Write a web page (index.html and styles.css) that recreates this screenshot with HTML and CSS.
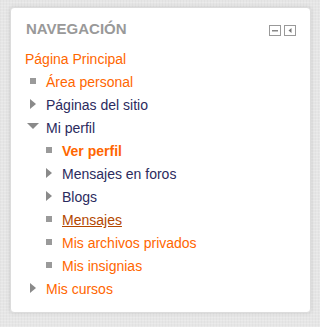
FILE: index.html
```html
<!DOCTYPE html>
<html lang="es">
<head>
<meta charset="utf-8">
<title>Navegación</title>
<link rel="stylesheet" href="styles.css">
</head>
<body>
<section class="block">
  <header class="block-header">
    <h2 class="block-title">NAVEGACIÓN</h2>
    <div class="block-controls">
      <svg class="ctl" width="12" height="11" viewBox="0 0 12 11"><rect x="0.5" y="0.5" width="11" height="10" fill="#fff" stroke="#999"/><rect x="3" y="5" width="6" height="1.5" fill="#888"/></svg>
      <svg class="ctl" width="12" height="11" viewBox="0 0 12 11"><rect x="0.5" y="0.5" width="11" height="10" fill="#fff" stroke="#999"/><path d="M7.5 3 L4.5 5.5 L7.5 8 Z" fill="#777"/></svg>
    </div>
  </header>
  <ul class="tree">
    <li class="top"><a class="link" href="#">Página Principal</a></li>
    <li>
      <ul class="level">
        <li class="row"><span class="ico"><svg class="sq" width="6" height="6"><rect width="6" height="6" fill="#9a9a9a"/></svg></span><a class="link" href="#">Área personal</a></li>
        <li class="row"><span class="ico"><svg class="tri-r" width="6" height="10"><path d="M0 0 L6 5 L0 10 Z" fill="#8a8a8a"/></svg></span><span class="label">Páginas del sitio</span></li>
        <li>
          <div class="row"><span class="ico"><svg class="tri-d" width="12" height="6"><path d="M0 0 L12 0 L6 6 Z" fill="#8a8a8a"/></svg></span><span class="label">Mi perfil</span></div>
          <ul class="level sub">
            <li class="row"><span class="ico"><svg class="sq" width="6" height="6"><rect width="6" height="6" fill="#9a9a9a"/></svg></span><a class="link active" href="#">Ver perfil</a></li>
            <li class="row"><span class="ico"><svg class="tri-r" width="6" height="10"><path d="M0 0 L6 5 L0 10 Z" fill="#8a8a8a"/></svg></span><span class="label">Mensajes en foros</span></li>
            <li class="row"><span class="ico"><svg class="tri-r" width="6" height="10"><path d="M0 0 L6 5 L0 10 Z" fill="#8a8a8a"/></svg></span><span class="label">Blogs</span></li>
            <li class="row"><span class="ico"><svg class="sq" width="6" height="6"><rect width="6" height="6" fill="#9a9a9a"/></svg></span><a class="link hover" href="#">Mensajes</a></li>
            <li class="row"><span class="ico"><svg class="sq" width="6" height="6"><rect width="6" height="6" fill="#9a9a9a"/></svg></span><a class="link" href="#">Mis archivos privados</a></li>
            <li class="row"><span class="ico"><svg class="sq" width="6" height="6"><rect width="6" height="6" fill="#9a9a9a"/></svg></span><a class="link" href="#">Mis insignias</a></li>
          </ul>
        </li>
        <li class="row"><span class="ico"><svg class="tri-r" width="6" height="10"><path d="M0 0 L6 5 L0 10 Z" fill="#8a8a8a"/></svg></span><a class="link" href="#">Mis cursos</a></li>
      </ul>
    </li>
  </ul>
</section>
</body>
</html>
```
FILE: styles.css
```css
html, body {
  margin: 0;
  padding: 0;
}
body {
  width: 320px;
  height: 327px;
  box-sizing: border-box;
  padding: 7px 9px 0 10px;
  background-color: #e6e6e6;
  background-image:
    repeating-linear-gradient(0deg, rgba(255,255,255,0.18) 0 1px, transparent 1px 3px),
    repeating-linear-gradient(90deg, rgba(0,0,0,0.025) 0 1px, transparent 1px 3px);
  font-family: "Liberation Sans", Arial, sans-serif;
  font-size: 14px;
  overflow: hidden;
}
.block {
  box-sizing: border-box;
  width: 301px;
  height: 306px;
  background: #fff;
  border: 1px solid #dcdcdc;
  border-radius: 4px;
  box-shadow: 0 0 4px rgba(0,0,0,0.12);
  padding: 11px 14px 0 14px;
}
.block-header {
  display: flex;
  justify-content: space-between;
  align-items: flex-start;
  margin-bottom: 9px;
}
.block-title {
  margin: 0;
  font-size: 15px;
  line-height: 20px;
  font-weight: bold;
  color: #999;
  padding-left: 1px;
}
.block-controls {
  display: flex;
  gap: 3px;
  margin-top: 6px;
}
.ctl {
  display: block;
}
.tree, .level {
  list-style: none;
  margin: 0;
  padding: 0;
}
.sub {
  padding-left: 16px;
}
.top {
  height: 23px;
  line-height: 23px;
}
.row {
  display: flex;
  align-items: flex-start;
  height: 23px;
  line-height: 23px;
}
.ico {
  width: 16px;
  margin-right: 5px;
  display: flex;
  justify-content: center;
  flex: none;
}
.ico svg {
  display: block;
}
.sq { margin-top: 7px; }
.tri-r { margin-top: 5px; }
.tri-d { margin-top: 6px; }
.link {
  color: #f60;
  text-decoration: none;
}
.link.active {
  font-weight: bold;
}
.link.hover {
  color: #b34700;
  text-decoration: underline;
}
.label {
  color: #2b2b5e;
}
```
